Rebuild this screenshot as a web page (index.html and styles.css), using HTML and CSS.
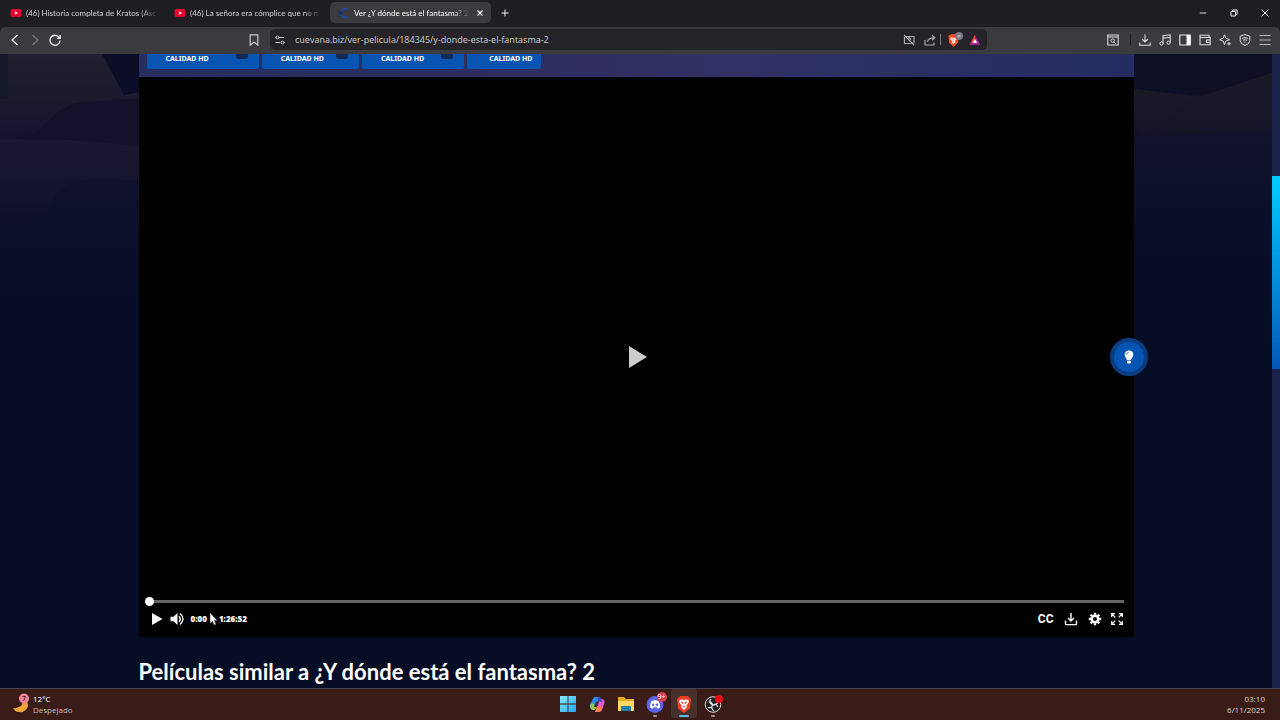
FILE: index.html
```
<!DOCTYPE html>
<html lang="es">
<head>
<meta charset="utf-8">
<meta name="viewport" content="width=device-width, initial-scale=1">
<title>Ver ¿Y dónde está el fantasma? 2</title>
<link rel="stylesheet" href="styles.css">
</head>
<body>
<header class="browser">
  <div class="tabstrip">
    <nav class="tabs" aria-label="Pestañas">
      <button class="tab"><svg class="favicon" viewBox="0 0 12 12"><rect x="0.5" y="2" width="11" height="8" rx="2" fill="#e8002f"/><path d="M5 4.3v3.4L8 6z" fill="#fff"/></svg><span class="tab-title">(46) Historia completa de Kratos (Asc</span></button>
      <button class="tab"><svg class="favicon" viewBox="0 0 12 12"><rect x="0.5" y="2" width="11" height="8" rx="2" fill="#e8002f"/><path d="M5 4.3v3.4L8 6z" fill="#fff"/></svg><span class="tab-title">(46) La señora era cómplice que no n</span></button>
      <button class="tab tab-active"><svg class="favicon" viewBox="0 0 12 12"><path d="M9.5 2.6A4.2 4.2 0 1 0 9.5 9.4" fill="none" stroke="#20469a" stroke-width="2"/><path d="M0.5 4.5h4v3h-4" fill="#183068"/><path d="M5 5h5v2H5z" fill="#3b3a3e"/></svg><span class="tab-title">Ver ¿Y dónde está el fantasma? 2</span><svg class="tab-close" viewBox="0 0 8 8"><path d="M1.5 1.5l5 5m0-5l-5 5" stroke="#fff" stroke-width="1.2"/></svg></button>
    </nav>
    <button class="new-tab" aria-label="Nueva pestaña"><svg viewBox="0 0 8 8"><path d="M4 .5v7M.5 4h7" stroke="#eee" stroke-width="1"/></svg></button>
    <div class="window-controls">
      <button aria-label="Minimizar"><svg viewBox="0 0 8 8"><path d="M.8 4h6.4" stroke="#ddd" stroke-width="1"/></svg></button>
      <button aria-label="Restaurar"><svg viewBox="0 0 8 8"><path d="M1 2.5h4.5V7H1zM2.7 2.3V1h4.4v4.6H5.7" fill="none" stroke="#eee" stroke-width="1"/></svg></button>
      <button aria-label="Cerrar"><svg viewBox="0 0 8 8"><path d="M.7.7l6.6 6.6m0-6.6L.7 7.3" stroke="#eee" stroke-width="1"/></svg></button>
    </div>
  </div>
  <div class="toolbar">
    <div class="toolbar-start">
      <button aria-label="Atrás"><svg viewBox="0 0 12 12"><path d="M8.5 1L3 6l5.500 5" fill="none" stroke="#eee" stroke-width="1.300"/></svg></button>
      <button aria-label="Adelante"><svg viewBox="0 0 12 12"><path d="M3.500 1L9 6l-5.500 5" fill="none" stroke="#77777b" stroke-width="1.300"/></svg></button>
      <button aria-label="Recargar"><svg viewBox="0 0 12 12"><path d="M10.300 3.700A5 5 0 1 0 11 6.500M11.200 1v3.300H7.800" fill="none" stroke="#eee" stroke-width="1.300"/></svg></button>
      <button class="bookmark" aria-label="Marcador"><svg viewBox="0 0 12 12"><path d="M2.200.8h7.600v10.400L6 8l-3.800 3.200z" fill="none" stroke="#ccc" stroke-width="1.200"/></svg></button>
    </div>
    <div class="address">
      <svg viewBox="0 0 12 12"><path d="M1 3.500h2M5 3.500h5M1.500 8.500h5M10 8.500h1" stroke="#ccc"/><circle cx="3.500" cy="3.500" r="1.400" fill="#242328" stroke="#ccc"/><circle cx="8.500" cy="8.500" r="1.400" fill="#242328" stroke="#ccc"/></svg>
      <input class="url" type="text" aria-label="Dirección" value="cuevana.biz/ver-pelicula/184345/y-donde-esta-el-fantasma-2">
      <button class="cast" aria-label="Vídeo bloqueado"><svg viewBox="0 0 12 12"><path d="M3 2.500h8v7M1.500 3v6.500h7M1 1l10 10M5 2.500l3 3" fill="none" stroke="#aaa" stroke-width="1.200"/></svg></button>
      <button class="share" aria-label="Compartir"><svg viewBox="0 0 12 12"><path d="M1 6v5h9V8.500M3.500 8c.3-3 2.200-4.200 6.500-4.200M8 1.200l2.800 2.600L8 6.300" fill="none" stroke="#aaa" stroke-width="1.200"/></svg></button>
      <span class="divider"></span>
      <button class="shield" aria-label="Brave Shields"><svg viewBox="0 0 18 16"><path d="M4 3l1.500-1h4L11 3l1.500.5-.5 7-4.500 4.500L3 10.500l-.5-7z" fill="#ef4d23"/><path d="M5 5l2.500 1L10 5l1 2-2 2 .5 1.500-2 1.500-2-1.500L6 9 4 7z" fill="#ffd3c5"/><circle cx="13" cy="4" r="4" fill="#777b86"/><path d="M11.500 5.500h3V3h-3z" fill="#a9adb8"/></svg></button>
      <button class="rewards" aria-label="Brave Rewards"><svg viewBox="0 0 12 12"><path d="M6 1l5.500 10H.5z" fill="#a01b9c"/><path d="M6 1L.5 11l5.500-5z" fill="#f0472b"/><path d="M6 5L8.500 9h-5z" fill="#fff"/></svg></button>
    </div>
    <div class="tools">
      <button aria-label="Buscar pestañas"><svg viewBox="0 0 12 12"><path d="M.8 1h10.400v10H.8zM1 3h10" fill="none" stroke="#ddd" stroke-width="1.100"/><circle cx="5.700" cy="6.600" r="1.700" fill="none" stroke="#ddd"/><path d="M7 8l1.500 1.500" stroke="#ddd"/></svg></button>
      <span class="divider divider-dark"></span>
      <button aria-label="Descargas"><svg viewBox="0 0 12 12"><path d="M6 .5v7M3 5l3 3 3-3M.8 8.500v2.700h10.400V8.500" fill="none" stroke="#ddd" stroke-width="1.100"/></svg></button>
      <button aria-label="Música"><svg viewBox="0 0 12 12"><path d="M4 9.500V1.800L11.200.8v7.700M4 4.200l7.200-1" fill="none" stroke="#ddd" stroke-width="1.100"/><circle cx="2.500" cy="9.500" r="1.600" fill="none" stroke="#ddd"/><circle cx="9.600" cy="8.700" r="1.600" fill="none" stroke="#ddd"/></svg></button>
      <button aria-label="Barra lateral"><svg viewBox="0 0 12 12"><path d="M.8 1h10.400v10H.8z" fill="none" stroke="#eee" stroke-width="1.100"/><path d="M7.500 1h4v10h-4z" fill="#fff"/></svg></button>
      <button aria-label="Cartera"><svg viewBox="0 0 12 12"><path d="M10 3.500V1.200H1v9.600h10.200V3.500H1M11 6H7.500v2.500H11" fill="none" stroke="#ddd" stroke-width="1.100"/></svg></button>
      <button aria-label="Leo"><svg viewBox="0 0 12 12"><path d="M5.500.8l1.300 3.400 3.700 1.500-3.700 1.400-1.300 3.500-1.300-3.500L.7 5.700l3.500-1.500z" fill="none" stroke="#ddd"/><path d="M10 8v3.500M8.300 9.800h3.500" stroke="#ddd"/></svg></button>
      <button aria-label="VPN"><svg viewBox="0 0 12 12"><path d="M6 .6l4.800 1.600v4.300L9.500 9.500 6 11.500 2.500 9.500 1.200 6.500V2.200z" fill="none" stroke="#ddd"/><path d="M3 4.500q3-2 6 0M4 6.300q2-1.300 4 0M5.300 8h1.400" fill="none" stroke="#ddd"/></svg></button>
      <button aria-label="Menú"><svg viewBox="0 0 12 12"><path d="M.5 1.500h11M.5 6h11M.5 10.500h11" stroke="#bbb" stroke-width="1.200"/></svg></button>
    </div>
  </div>
</header>

<main class="page">
  <svg class="backdrop" viewBox="0 0 1272 634" preserveAspectRatio="none" aria-hidden="true">
    <defs>
      <linearGradient id="stone" x1="0" y1="0" x2="0" y2="1"><stop offset="0" stop-color="#22202e"/><stop offset="1" stop-color="#15142e"/></linearGradient>
      <linearGradient id="dusk" x1="0" y1="0" x2="0" y2="1"><stop offset="0" stop-color="#18152f"/><stop offset="1" stop-color="#060d25"/></linearGradient>
      <linearGradient id="haze" x1="0" y1="0" x2="0" y2="1"><stop offset="0" stop-color="#1a1830"/><stop offset="1" stop-color="#0c0f28"/></linearGradient>
      <linearGradient id="rock" x1="0" y1="0" x2="0" y2="1"><stop offset="0" stop-color="#1b1926"/><stop offset="1" stop-color="#141429"/></linearGradient>
    </defs>
    <path d="M0 0h139v260H0z" fill="url(#dusk)"/>
    <path d="M0 0h102l22 40 15-1v45H0z" fill="url(#stone)"/>
    <path d="M0 0h8v45H0z" fill="#151829"/>
    <path d="M102 0h37v38l-15 3z" fill="#0c0e27"/>
    <path d="M0 88l37-10 20-20 17-9 65-5v49l-139-1z" fill="#14122b"/>
    <path d="M0 85l70 1 69 6v35q-80-10-86 20-10 25-53 30z" fill="url(#haze)"/>
    <path d="M1134 0h138v210h-138z" fill="url(#dusk)"/>
    <path d="M1134 0h138v20l-60 23-78-8z" fill="#0e0e25"/>
    <path d="M1198 43l74-24v58l-127 5 25-21z" fill="url(#rock)"/>
    <path d="M1134 35l64 8-28 18-25 21-11-6z" fill="url(#rock)"/>
  </svg>
  <div class="container">
    <div class="servers">
      <button class="server">CALIDAD HD<span class="server-flag"></span></button>
      <button class="server server-b">CALIDAD HD<span class="server-flag"></span></button>
      <button class="server server-c">CALIDAD HD<span class="server-flag"></span></button>
      <button class="server server-last">CALIDAD HD</button>
    </div>
    <section class="player" aria-label="Reproductor">
      <button class="big-play" aria-label="Reproducir"><svg viewBox="0 0 20 22"><path d="M1 0l18 11L1 22z" fill="#ccc"/></svg></button>
      <input class="seek" type="range" min="0" max="5212" value="0" aria-label="Posición">
      <div class="controls">
        <button class="play" aria-label="Reproducir"><svg viewBox="0 0 14 14"><path d="M2 1l10.500 6L2 13z" fill="#fff"/></svg></button>
        <button class="volume" aria-label="Volumen"><svg viewBox="0 0 14 14"><path d="M.5 4.700h3L7.500 1v12l-4-3.700h-3z" fill="#fff"/><path d="M9 4.200q2.500 2.800 0 5.600M10 1.500q6 5.500 0 11" fill="none" stroke="#fff" stroke-width="1.400"/></svg></button>
        <span class="time">0:00</span>
        <svg class="cursor" viewBox="0 0 9 14"><path d="M1 .8v10.700l2.500-2.300L5 13l2-.8-1.600-3.700h3z" fill="#fff" stroke="#333" stroke-width=".5"/></svg>
        <span class="time">1:26:52</span>
        <div class="controls-end">
          <button class="cc" aria-label="Subtítulos">CC</button>
          <button aria-label="Descargar"><svg viewBox="0 0 14 14"><path d="M7 1v8M4 6l3 3 3-3M1.500 8.500v3.300q0 .8.800.8h9.400q.8 0 .8-.8V8.500" fill="none" stroke="#fff" stroke-width="1.400"/></svg></button>
          <button aria-label="Ajustes"><svg viewBox="0 0 14 14"><circle cx="7" cy="7" r="3.300" fill="none" stroke="#fff" stroke-width="2.600"/><path d="M7 .8v2M7 11.200v2M.8 7h2M11.200 7h2M2.600 2.600L4 4M10 10l1.400 1.400M11.400 2.600L10 4M4 10l-1.400 1.400" stroke="#fff" stroke-width="2.400"/></svg></button>
          <button aria-label="Pantalla completa"><svg viewBox="0 0 14 14"><path d="M1.700 5V1.700H5M9 1.700h3.300V5M12.300 9v3.300H9M5 12.300H1.700V9M2 2l3.300 3.300M12 2L8.700 5.300M12 12L8.700 8.700M2 12l3.300-3.300" fill="none" stroke="#fff" stroke-width="1.200"/></svg></button>
        </div>
      </div>
      <button class="lights" aria-label="Apagar luces"><svg viewBox="0 0 12 16"><path d="M6 1.500a4.500 4.500 0 0 0-4.300 4.500c0 2.200 2 3 2.200 5h4.200c.2-2 2.200-2.800 2.200-5A4.500 4.500 0 0 0 6 1.500zM4 11.700h4v1.700l-.8 1H4.800l-.8-1z" fill="#fff"/><path d="M3.500 5.700q.2-2 2.200-2.200" fill="none" stroke="#0a50ad" stroke-width=".8"/></svg></button>
    </section>
    <h2 class="similar">Películas similar a ¿Y dónde está el fantasma? 2</h2>
  </div>
  <div class="scrollbar"><div class="scroll-thumb"></div></div>
</main>

<footer class="taskbar">
  <button class="weather">
    <svg viewBox="0 0 20 22"><path d="M11 6q3 8-9 9.500 4 5 9.500 3.500 7-3 5-9.500-2-4-5.500-3.500z" fill="#eda33b"/><circle cx="13" cy="5.500" r="5" fill="#ee8296"/><path d="M11.500 3.500h3l-2 4.500" fill="none" stroke="#622537"/></svg>
    <span class="weather-text"><span class="strong">12°C</span><span>Despejado</span></span>
  </button>
  <nav class="apps" aria-label="Aplicaciones">
    <button class="app" aria-label="Inicio"><svg viewBox="0 0 20 20"><defs><linearGradient id="win" x1="0" y1="0" x2="1" y2="1"><stop stop-color="#8ceaff"/><stop offset="1" stop-color="#20a4e8"/></linearGradient></defs><path d="M2 2h7.600v7.600H2zM10.400 2H18v7.600h-7.600zM2 10.400h7.600V18H2zM10.400 10.400H18V18h-7.600z" fill="url(#win)"/></svg></button>
    <button class="app" aria-label="Copilot"><svg viewBox="0 0 20 20"><path d="M7 3h5l2 3-3 1-2 8H5q-3-1-2-5z" fill="#2a86e0"/><path d="M3 11l3-2 3 4-1 3H5q-2-1-2-5z" fill="#8bc94d"/><path d="M14 5q4 0 3.500 4L15 16l-2 2H8l2-4 2-8z" fill="#d95ad0"/><path d="M10 12l6 1-2 4-1 1H8z" fill="#ff7d55"/><path d="M11 3l3 1 1 4-4-1z" fill="#394bc8"/><path d="M9 8l3-1-2 6H7z" fill="#4b2630"/></svg></button>
    <button class="app" aria-label="Explorador"><svg viewBox="0 0 20 20"><path d="M2 3h6l2 2h8v12H2z" fill="#e9aa25"/><path d="M2 7h16v10H2z" fill="#ffd963"/><path d="M5 17v-4q0-1 1-1h8q1 0 1 1v4z" fill="#217eae"/></svg></button>
    <button class="app" aria-label="Discord"><svg viewBox="0 0 20 20"><circle cx="10" cy="10.500" r="8.500" fill="#5965e5"/><path d="M6.500 7q3.500-1.500 7 0 2 3.500 1.700 6.500l-2.500 1.200-1-1.500H8.500l-1 1.500L5 13.500Q4.700 10.500 6.500 7z" fill="#fff"/><circle cx="8.200" cy="10.700" r="1.200" fill="#5965e5"/><circle cx="12" cy="10.700" r="1.200" fill="#5965e5"/></svg><span class="count">9+</span><span class="mark"></span></button>
    <button class="app app-active" aria-label="Brave"><svg viewBox="0 0 20 20"><path d="M6 2h8l1.500 2 1.500.500-1 10-6 4.500-6-4.500-1-10L4.500 4z" fill="#ee3e24"/><path d="M5.500 6l3-.5L10 6l1.500-.5 3 .5.500 2-2.500 3.500.5 1.500L10 16l-3-3 .5-1.500L5 8z" fill="#fff"/><path d="M7 8l2 .7-.5 1.500M13 8l-2 .7.5 1.500M8.500 13l1.500-1 1.500 1" fill="none" stroke="#ee3e24"/></svg><span class="mark mark-wide"></span></button>
    <button class="app" aria-label="OBS"><svg viewBox="0 0 20 20"><circle cx="10" cy="10.500" r="7.800" fill="#242225" stroke="#ddd"/><path d="M8 5q-3 3 1.500 6 3 .5 5.500-2.500M15 13q-2-4-5.500-2-2 3 1.500 6M5 13.500q4 1 4.500-2.500Q9 7.500 5.500 8" fill="none" stroke="#ddd" stroke-width="1.200"/><circle cx="16" cy="5" r="4" fill="#e80b17"/></svg><span class="mark"></span></button>
  </nav>
  <div class="clock"><time>03:10</time><time>6/11/2025</time></div>
</footer>
</body>
</html>
```

FILE: styles.css
```
* {
  box-sizing: border-box;
}

body {
  margin: 0;
  height: 100vh;
  display: flex;
  flex-direction: column;
  overflow: hidden;
  background: #060d25;
  color: #fff;
  font-family: "Open Sans", "Noto Sans", sans-serif;
  font-size: 8px;
}

button {
  padding: 0;
  border: 0;
  background: none;
  color: inherit;
  font: inherit;
  display: flex;
  align-items: center;
  justify-content: center;
}

svg {
  display: block;
  flex: none;
}

.browser {
  background: #1f1e23;
}

.tabstrip {
  height: 27px;
  padding-bottom: 2px;
  display: flex;
  align-items: center;
}

.tabs {
  display: flex;
}

.tab {
  width: 164px;
  height: 21px;
  padding: 0 5px 0 10px;
  gap: 4px;
  justify-content: flex-start;
  color: #d0d0d0;
  font-family: Lato, "Open Sans", sans-serif;
  font-size: 8px;
}

.tab-title {
  flex: 1;
  min-width: 0;
  white-space: nowrap;
  text-align: left;
  mask-image: linear-gradient(to right, #000 85%, transparent);
}

.tab-active {
  width: 161px;
  margin-left: 2px;
  padding-left: 8px;
  border-radius: 5px;
  background: #3b3a3e;
  color: #fff;
}

.favicon {
  width: 12px;
  height: 12px;
}

.tab-close {
  width: 8px;
  height: 8px;
  margin-left: 2px;
  margin-right: 2px;
}

.new-tab {
  width: 28px;
}

.new-tab svg,
.window-controls svg {
  width: 8px;
  height: 8px;
}

.window-controls {
  display: flex;
  margin-left: auto;
}

.window-controls button {
  width: 31px;
  height: 25px;
}

.toolbar {
  height: 27px;
  padding-bottom: 2px;
  display: flex;
  align-items: center;
  background: #3b3a3e;
  border-radius: 5px 5px 0 0;
}

.toolbar svg {
  width: 12px;
  height: 12px;
}

.toolbar-start {
  width: 270px;
  display: flex;
  gap: 8px;
  padding: 0 10px 0 9px;
}

.bookmark {
  margin-left: auto;
}

.address {
  width: 56%;
  height: 21px;
  padding: 0 6px 0 4px;
  display: flex;
  align-items: center;
  border-radius: 5px;
  background: #242328;
}

.url {
  flex: 1;
  min-width: 0;
  margin-left: 9px;
  padding: 0;
  border: 0;
  outline: 0;
  background: none;
  color: #ccc;
  font: inherit;
  font-size: 9px;
}

.cast {
  margin-right: 9px;
}

.divider {
  width: 1px;
  height: 11px;
  margin: 0 5px 0 4px;
  background: #77777b;
}

.address .shield svg {
  width: 18px;
  height: 16px;
}

.rewards {
  margin-left: 5px;
}

.tools {
  display: flex;
  align-items: center;
  gap: 8px;
  margin-left: auto;
  padding-right: 9px;
}

.divider-dark {
  margin: 0 0 0 3px;
  background: #222126;
}

.page {
  position: relative;
  flex: 1;
  min-height: 0;
  display: flex;
  overflow: hidden;
}

.backdrop {
  position: absolute;
  top: 0;
  left: 0;
  width: calc(100% - 8px);
  height: 100%;
}

.container {
  position: relative;
  width: 100%;
  max-width: 995px;
  margin: 0 auto;
}

.servers {
  height: 23px;
  padding-left: 8px;
  display: flex;
  gap: 3px;
  background: linear-gradient(90deg, #262f60, #302e60 45%, #303164 60%, #232d60);
}

.server {
  position: relative;
  height: 15px;
  padding: 0 50px 6px 19px;
  border-radius: 0 0 2px 2px;
  background: #0854b3;
  font-family: "Noto Sans", sans-serif;
  font-size: 7px;
  font-weight: 700;
  white-space: nowrap;
}

.server-b {
  padding-right: 35px;
}

.server-c {
  padding-right: 40px;
}

.server-last {
  padding: 0 9px 6px 22px;
}

.server-flag {
  position: absolute;
  top: 0;
  right: 11px;
  width: 12px;
  height: 5px;
  border-radius: 0 0 2px 2px;
  background: #102a55;
}

.player {
  position: relative;
  aspect-ratio: 16 / 9;
  padding: 0 10px 9px 6px;
  display: flex;
  flex-direction: column;
  background: #000;
}

.big-play {
  flex: 1;
  padding-left: 8px;
  padding-top: 40px;
}

.big-play svg {
  width: 20px;
  height: 22px;
}

.seek {
  appearance: none;
  width: 100%;
  height: 9px;
  margin: 0 0 4px;
  background: linear-gradient(#666, #666) 4px 3px / 100% 3px no-repeat;
}

.seek::-webkit-slider-thumb {
  appearance: none;
  width: 9px;
  height: 9px;
  border-radius: 50%;
  background: #fff;
}

.controls {
  height: 18px;
  padding-left: 5px;
  display: flex;
  align-items: center;
}

.controls svg {
  width: 14px;
  height: 14px;
}

.volume {
  margin: 0 7px 0 6px;
}

.time {
  font-size: 8px;
  font-weight: 800;
}

.controls .cursor {
  width: 9px;
  margin: 0 1px 0 2px;
}

.controls-end {
  display: flex;
  align-items: center;
  gap: 10px;
  margin-left: auto;
}

.controls-end button:last-child {
  margin-left: -2px;
}

.cc {
  font-family: Roboto, sans-serif;
  font-size: 12px;
  font-weight: 700;
}

.lights {
  position: absolute;
  top: 50%;
  right: -14px;
  width: 38px;
  height: 38px;
  transform: translateY(-50%);
  border: 4px solid #093f82;
  border-radius: 50%;
  background: #0754b2;
}

.lights svg {
  width: 12px;
  height: 16px;
}

.similar {
  margin: 20px 0 0;
  font-family: Lato, "Open Sans", sans-serif;
  font-size: 22px;
  font-weight: 700;
  line-height: 30px;
  white-space: nowrap;
}

.scrollbar {
  position: relative;
  width: 8px;
  background: #1c234a;
}

.scroll-thumb {
  height: 193px;
  margin-top: 122px;
  background: linear-gradient(#00ccff, #0657b8);
}

.taskbar {
  height: 32px;
  padding-bottom: 2px;
  display: grid;
  grid-template-columns: 1fr auto 1fr;
  align-items: center;
  background: #391c18;
  border-top: 1px solid #47414b;
}

.weather {
  justify-self: start;
  padding-left: 11px;
  gap: 2px;
}

.weather svg {
  width: 20px;
  height: 22px;
}

.weather-text {
  display: grid;
  text-align: left;
  line-height: 11px;
  color: #c5bbb8;
}

.strong {
  color: #fff;
}

.apps {
  display: flex;
  height: 29px;
  gap: 3px;
}

.app {
  position: relative;
  width: 26px;
}

.app svg {
  width: 20px;
  height: 20px;
}

.app-active {
  background: #45302c;
  border-radius: 3px;
}

.count {
  position: absolute;
  top: 3px;
  right: 1px;
  width: 10px;
  height: 10px;
  border-radius: 50%;
  background: #d83c48;
  font-size: 7px;
  line-height: 9px;
}

.mark {
  position: absolute;
  bottom: 1px;
  left: 11px;
  width: 4px;
  height: 2px;
  border-radius: 1px;
  background: #a4928e;
}

.mark-wide {
  left: 8px;
  width: 10px;
  background: #58b9e6;
}

.clock {
  display: grid;
  justify-self: end;
  padding-right: 15px;
  text-align: right;
  line-height: 11px;
  color: #ddd0cc;
}
```
